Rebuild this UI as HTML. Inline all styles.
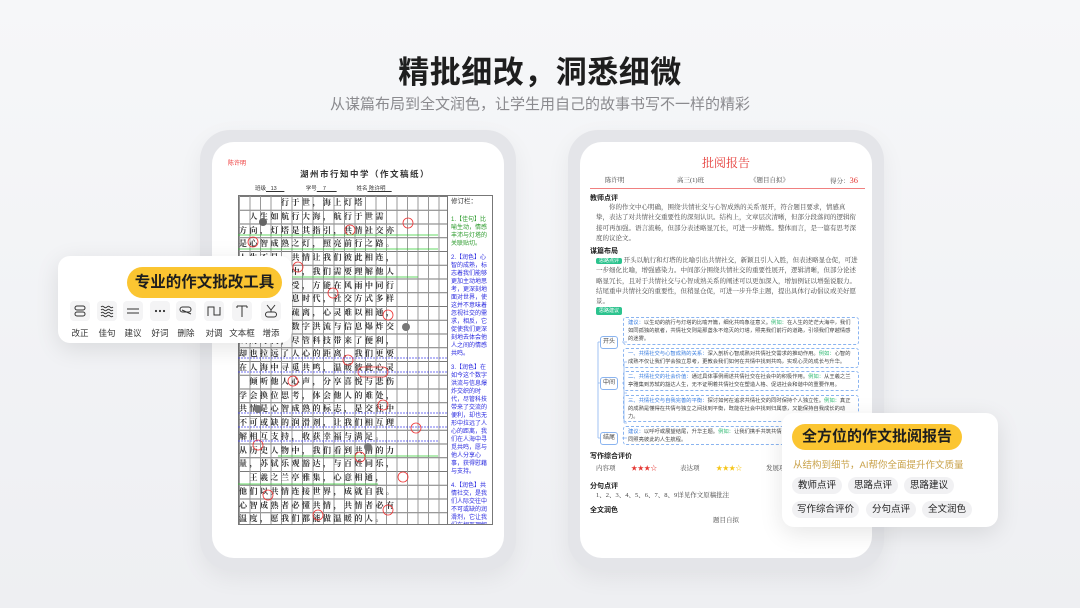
<!DOCTYPE html>
<html><head><meta charset="utf-8">
<style>
*{margin:0;padding:0;box-sizing:border-box}
body{width:1080px;height:608px;overflow:hidden;background:linear-gradient(180deg,#f6f7f9,#eeeff2);font-family:"Liberation Sans","Noto Sans CJK SC",sans-serif;position:relative}
.abs{position:absolute}
.h1{left:0;width:1080px;top:47px;text-align:center;font-size:31px;font-weight:bold;color:#1e1e1e;letter-spacing:0.5px}
.h2{left:0;width:1080px;top:93px;text-align:center;font-size:15px;color:#8a8a8e}
.frame{background:#e4e5e9;border-radius:30px;box-shadow:0 8px 24px rgba(0,0,0,.06)}
.screen{background:#fff;border-radius:22px;overflow:hidden}
.serif{font-family:"Liberation Serif","Noto Serif CJK SC",serif}
.grid{left:238px;top:195px;width:210px;height:330px;border:1px solid #777;
background-image:linear-gradient(90deg,#999 1px,transparent 1px),linear-gradient(#777 1px,transparent 1px);
background-size:10.5px 13.75px,10.5px 13.75px}
.rows{left:238px;top:196px;width:210px}
.rows div{height:13.75px;font-size:8px;line-height:13px;letter-spacing:2.5px;color:#333;white-space:nowrap;overflow:hidden;font-family:"Noto Serif CJK SC",serif;padding-left:1px;font-weight:bold}
.side{left:448px;top:195px;width:45px;height:330px;border:1px solid #777;border-left:none;font-size:6px;line-height:8px;padding:2px 3px;overflow:hidden}
.g{color:#2a9a2a}.b{color:#2a2ae0}
.pop{background:#fff;border-radius:12px;box-shadow:0 6px 24px rgba(0,0,0,.10)}
.pill{background:#fbc531;border-radius:16px;font-weight:bold;color:#1e1e1e;text-align:center}
.ic{width:20px;height:20px;background:#f4f4f5;border-radius:4px;display:flex;align-items:center;justify-content:center}
.tool{position:absolute;top:301px;width:30px;text-align:center;font-size:8.5px;color:#333}
.tool .ic{margin:0 auto 6px}
.chip{position:absolute;height:17px;border-radius:9px;background:#f1f1f3;font-size:9.5px;line-height:17px;text-align:center;color:#222}
.rp{font-size:6.5px;color:#444;line-height:10.3px}
.sec{font-size:7px;font-weight:bold;color:#222;font-family:"Liberation Sans","Noto Sans CJK SC",sans-serif}
.box{position:absolute;border:1px dashed #8ab4f0;border-radius:3px;font-size:5.3px;line-height:8px;color:#444;padding:1px 4px;overflow:hidden}
.node{position:absolute;border:1px solid #8ab4f0;border-radius:3px;font-size:6px;width:18px;height:13px;line-height:11px;text-align:center;color:#444;background:#fff}
.bl{color:#3a7ee0}.gr{color:#2cb870}
</style></head><body>
<div class="abs h1">精批细改，洞悉细微</div>
<div class="abs h2">从谋篇布局到全文润色，让学生用自己的故事书写不一样的精彩</div>

<div class="abs frame" style="left:200px;top:130px;width:316px;height:440px"></div>
<div class="abs screen" style="left:212px;top:142px;width:292px;height:416px"></div>
<div class="abs" style="left:228px;top:158px;font-size:6px;color:#e33">陈许明</div>
<div class="abs" style="left:300px;top:168px;font-size:8.5px;font-weight:bold;color:#333;letter-spacing:1.5px">湖州市行知中学（作文稿纸）</div>
<div class="abs" style="left:255px;top:184px;font-size:5.5px;color:#333;white-space:pre">班级<u>   13     </u>              学号<u>    7       </u>             姓名<u> 陈许明    </u></div>
<div class="abs grid"></div>
<div class="abs rows">
<div>　　　　行于世，海上灯塔</div>
<div>　人生如航行大海，航行于世需</div>
<div>方向，灯塔是其指引，共情社交亦</div>
<div>是心智成熟之灯，照亮前行之路。</div>
<div>人生不易，共情让我们彼此相连，</div>
<div>在茫茫人海中，我们需要理解他人</div>
<div>的处境与感受，方能在风雨中同行</div>
<div>我们身处信息时代，社交方式多样</div>
<div>情感却日渐疏离，心灵难以相通，</div>
<div>在如今这个数字洪流与信息爆炸交</div>
<div>织的时代，尽管科技带来了便利，</div>
<div>却也拉远了人心的距离，我们更要</div>
<div>在人海中寻觅共鸣，温暖彼此心灵</div>
<div>　倾听他人心声，分享喜悦与悲伤</div>
<div>学会换位思考，体会他人的难处，</div>
<div>共情是心智成熟的标志，是交往中</div>
<div>不可或缺的润滑剂，让我们相互理</div>
<div>解相互支持，收获幸福与满足。</div>
<div>从历史人物中，我们看到共情的力</div>
<div>量，苏轼乐观豁达，与百姓同乐，</div>
<div>　王羲之兰亭雅集，心意相通，　</div>
<div>他们以共情连接世界，成就自我。</div>
<div>心智成熟者必懂共情，共情者必有</div>
<div>温度，愿我们都能做温暖的人。　</div>
</div>
<svg class="abs" style="left:238px;top:195px" width="210" height="330">
<g fill="none" stroke="#e33" stroke-width="0.8">
<circle cx="170" cy="28" r="5"/><circle cx="112" cy="35" r="5"/><circle cx="15" cy="47" r="5"/>
<circle cx="60" cy="72" r="5"/><circle cx="95" cy="98" r="5"/><circle cx="150" cy="120" r="5"/>
<circle cx="40" cy="140" r="5"/><circle cx="110" cy="165" r="5"/><circle cx="55" cy="186" r="5"/>
<rect x="120" y="172" width="30" height="10" rx="5"/><circle cx="145" cy="210" r="5"/><circle cx="178" cy="233" r="5"/>
<circle cx="20" cy="250" r="5"/><circle cx="122" cy="262" r="5"/><circle cx="165" cy="282" r="5"/>
<circle cx="30" cy="300" r="5"/><circle cx="150" cy="315" r="5"/><circle cx="80" cy="320" r="5"/>
</g>
<g stroke="#3c3" stroke-width="0.8" fill="none"><path d="M0 40 H200 M0 54 H200 M0 82 H180 M40 261 H200 M0 289 H140"/></g>
<g stroke="#44e" stroke-width="0.8" stroke-dasharray="2 1" fill="none"><path d="M0 163 H210 M0 177 H210 M0 218 H210 M0 232 H210 M0 246 H200"/></g>
<circle cx="25" cy="27" r="4" fill="#666"/><circle cx="168" cy="132" r="4" fill="#777"/><circle cx="20" cy="214" r="4" fill="#777"/><circle cx="130" cy="252" r="4" fill="#777"/>
</svg>
<div class="abs side">
<div style="color:#333;font-size:6.5px;margin-bottom:10px">修订栏：</div>
<div class="g">1.【佳句】比喻生动，情感丰沛与灯塔的关联贴切。</div>
<div class="b" style="margin-top:6px">2.【润色】心智的成熟，标志着我们能够更加主动地思考，更深刻地面对世界，使这并不意味着忽视社交的需求，相反，它促使我们更深刻地去体会他人之间的情感共鸣。</div>
<div class="b" style="margin-top:6px">3.【润色】在如今这个数字洪流与信息爆炸交织的时代，尽管科技带来了交流的便利，却也无形中拉远了人心的距离，我们在人海中寻觅共鸣，愿与他人分享心事，获得慰藉与支持。</div>
<div class="b" style="margin-top:6px">4.【润色】共情社交，是我们人际交往中不可或缺的润滑剂，它让我们在相互理解和支持中感受到幸福与满足，从而更加认同自我价值。</div>
<div class="g" style="margin-top:6px">5.【佳句】结合历史人物，情感共鸣阐述深刻。</div>
</div>

<div class="abs frame" style="left:568px;top:130px;width:316px;height:440px"></div>
<div class="abs screen" style="left:580px;top:142px;width:292px;height:416px"></div>
<div class="abs serif" style="left:580px;width:292px;top:154px;text-align:center;font-size:12px;color:#e53935">批阅报告</div>
<div class="abs serif rp" style="left:605px;top:176px;font-size:6.5px;width:260px">陈许明<span style="position:absolute;left:72px">高三(1)班</span><span style="position:absolute;left:145px">《题目自拟》</span><span style="position:absolute;left:225px;top:-1px">得分：<span style="color:#e53935;font-size:8.5px">36</span></span></div>
<div class="abs" style="left:590px;top:188px;width:275px;height:1px;background:#f08080"></div>
<div class="abs sec" style="left:590px;top:193px">教师点评</div>
<div class="abs serif rp" style="left:596px;top:203px;width:262px;text-indent:13px">你的作文中心明确，围绕'共情社交与心智成熟的关系'展开，符合题目要求，情感真挚，表达了对共情社交重要性的深刻认识。结构上，文章层次清晰，但部分段落间的逻辑衔接可再加强。语言流畅，但部分表述略显冗长，可进一步精炼。整体而言，是一篇有思考深度的议论文。</div>
<div class="abs sec" style="left:590px;top:246px">谋篇布局</div>
<div class="abs serif rp" style="left:596px;top:256px;width:262px"><span style="background:#2cc38e;color:#fff;font-size:5px;padding:0 3px;border-radius:2px;font-family:sans-serif">思路点评</span> 开头以航行和灯塔的比喻引出共情社交，新颖且引人入胜，但表述略显仓促，可进一步细化比喻，增强感染力。中间部分围绕共情社交的重要性展开，逻辑清晰，但部分论述略显冗长，且对于共情社交与心智成熟关系的阐述可以更加深入，增加例证以增强说服力。结尾重申共情社交的重要性，但稍显仓促，可进一步升华主题，提出具体行动倡议或美好愿景。</div>
<div class="abs" style="left:596px;top:307px;background:#2cc38e;color:#fff;font-size:5px;padding:0 3px;border-radius:2px;line-height:8px">思路建议</div>
<svg class="abs" style="left:590px;top:320px" width="40" height="125"><path d="M8 22 V118 M8 22 H12 M8 63 H12 M8 118 H12 M32 22 H37 M32 63 H34 M34 42 V103 M34 42 H37 M34 73 H37 M34 103 H37 M32 118 H37" stroke="#8ab4f0" fill="none" stroke-width="0.8"/></svg>
<div class="node" style="left:600px;top:336px">开头</div>
<div class="node" style="left:600px;top:377px">中间</div>
<div class="node" style="left:600px;top:432px">结尾</div>
<div class="box" style="left:623px;top:317px;width:236px;height:28px"><span class="bl">建议：</span>以生动的航行与灯塔的比喻开篇，细化共鸣象征意义。<span class="gr">例如：</span>在人生的茫茫大海中，我们如同孤独的航者，共情社交则是那盏永不熄灭的灯塔，照亮我们前行的道路，引领我们穿越情感的迷雾。</div>
<div class="box" style="left:623px;top:348px;width:236px;height:20px"><span class="bl">一、共情社交与心智成熟的关系：</span>深入剖析心智成熟对共情社交需求的推动作用。<span class="gr">例如：</span>心智的成熟不仅让我们学会独立思考，更教会我们如何在共情中找到共鸣，实现心灵的成长与升华。</div>
<div class="box" style="left:623px;top:371px;width:236px;height:20px"><span class="bl">二、共情社交的社会价值：</span>通过具体事例阐述共情社交在社会中的积极作用。<span class="gr">例如：</span>从王羲之兰亭雅集到苏轼的豁达人生，无不证明着共情社交在塑造人格、促进社会和谐中的重要作用。</div>
<div class="box" style="left:623px;top:395px;width:236px;height:27px"><span class="bl">三、共情社交与自我完善的平衡：</span>探讨如何在追求共情社交的同时保持个人独立性。<span class="gr">例如：</span>真正的成熟是懂得在共情与独立之间找到平衡，既能在社会中找到归属感，又能保持自我成长的动力。</div>
<div class="box" style="left:623px;top:426px;width:236px;height:19px"><span class="bl">建议：</span>以呼吁或展望结尾，升华主题。<span class="gr">例如：</span>让我们携手共筑共情之桥，为迎接彼此的世界，共同照亮彼此的人生航程。</div>
<div class="abs sec" style="left:590px;top:451px">写作综合评价</div>
<div class="abs serif rp" style="left:596px;top:464px;width:270px">内容项<span style="position:absolute;left:35px;color:#e53935">★★★☆</span><span style="position:absolute;left:84px">表达项</span><span style="position:absolute;left:120px;color:#f5c518">★★★☆</span><span style="position:absolute;left:170px">发展项</span></div>
<div class="abs sec" style="left:590px;top:481px">分句点评</div>
<div class="abs serif rp" style="left:596px;top:491px">1、2、3、4、5、6、7、8、9详见作文原稿批注</div>
<div class="abs sec" style="left:590px;top:505px">全文润色</div>
<div class="abs serif rp" style="left:580px;width:292px;text-align:center;top:516px">题目自拟</div>

<div class="abs pop" style="left:58px;top:256px;width:234px;height:87px"></div>
<div class="abs pill" style="left:127px;top:267px;width:155px;height:31px;line-height:31px;font-size:15.5px">专业的作文批改工具</div>
<div class="tool" style="left:65px"><div class="ic"><svg width="14" height="14" viewBox="0 0 14 14" fill="none" stroke="#333" stroke-width="1"><rect x="2" y="2" width="10" height="4" rx="2"/><rect x="2" y="8" width="10" height="4" rx="2"/></svg></div>改正</div>
<div class="tool" style="left:92px"><div class="ic"><svg width="14" height="14" viewBox="0 0 14 14" fill="none" stroke="#333" stroke-width="0.9"><path d="M1 3q1.5-1.5 3 0t3 0 3 0 3 0M1 6q1.5-1.5 3 0t3 0 3 0 3 0M1 9q1.5-1.5 3 0t3 0 3 0 3 0M1 12q1.5-1.5 3 0t3 0 3 0 3 0"/></svg></div>佳句</div>
<div class="tool" style="left:118px"><div class="ic"><svg width="14" height="14" viewBox="0 0 14 14" stroke="#333" stroke-width="1"><path d="M1 5H13M1 9H13"/></svg></div>建议</div>
<div class="tool" style="left:145px"><div class="ic"><svg width="14" height="14" viewBox="0 0 14 14" fill="#333"><circle cx="3" cy="7" r="1.1"/><circle cx="7" cy="7" r="1.1"/><circle cx="11" cy="7" r="1.1"/></svg></div>好词</div>
<div class="tool" style="left:171px"><div class="ic"><svg width="14" height="14" viewBox="0 0 14 14" fill="none" stroke="#333" stroke-width="1"><rect x="1" y="3" width="11" height="5" rx="2.5"/><path d="M3 6L12 10"/></svg></div>删除</div>
<div class="tool" style="left:199px"><div class="ic"><svg width="14" height="14" viewBox="0 0 14 14" fill="none" stroke="#333" stroke-width="1"><path d="M1 12V3H7V11H13V3"/></svg></div>对调</div>
<div class="tool" style="left:227px"><div class="ic"><svg width="14" height="14" viewBox="0 0 14 14" fill="none" stroke="#333" stroke-width="1"><path d="M2 2H12M7 2V13M2 2V4M12 2V4"/></svg></div>文本框</div>
<div class="tool" style="left:256px"><div class="ic"><svg width="14" height="14" viewBox="0 0 14 14" fill="none" stroke="#333" stroke-width="1"><path d="M3 1L7 6L11 1M7 6V8"/><rect x="1.5" y="8" width="11" height="5" rx="2.5"/></svg></div>增添</div>

<div class="abs pop" style="left:782px;top:413px;width:216px;height:114px"></div>
<div class="abs pill" style="left:792px;top:424px;width:170px;height:26px;line-height:26px;font-size:15px;border-radius:13px">全方位的作文批阅报告</div>
<div class="abs" style="left:793px;top:457px;font-size:9.5px;color:#c9a24a">从结构到细节，AI帮你全面提升作文质量</div>
<div class="chip" style="left:792px;top:477px;width:50px">教师点评</div>
<div class="chip" style="left:848px;top:477px;width:50px">思路点评</div>
<div class="chip" style="left:904px;top:477px;width:50px">思路建议</div>
<div class="chip" style="left:792px;top:501px;width:67px">写作综合评价</div>
<div class="chip" style="left:866px;top:501px;width:50px">分句点评</div>
<div class="chip" style="left:922px;top:501px;width:50px">全文润色</div>
</body></html>
